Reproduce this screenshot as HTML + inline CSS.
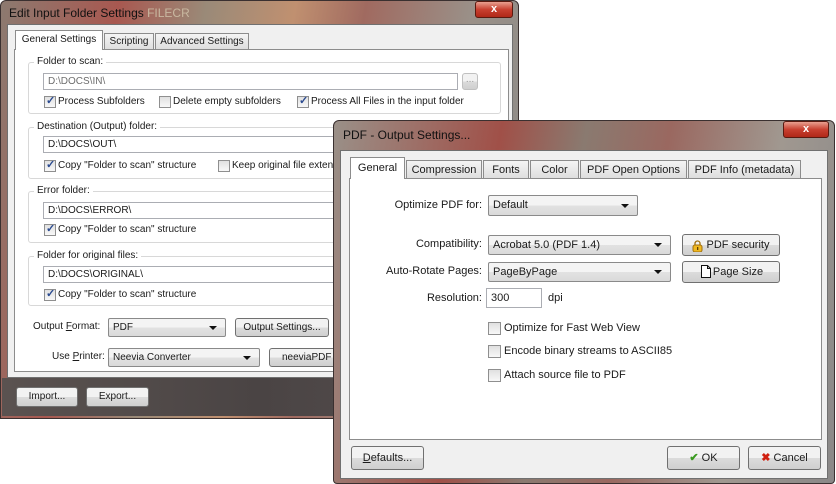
<!DOCTYPE html>
<html><head><meta charset="utf-8"><style>
*{box-sizing:border-box;margin:0;padding:0}
body{width:836px;height:484px;position:relative;background:#fff;overflow:hidden;font-family:"Liberation Sans",sans-serif;color:#1a1a1a}
.a{position:absolute}
.win{position:absolute;border:1px solid #3a3030;border-radius:6px 6px 0 0}
.L{font-size:10px}
.R{font-size:11px}
.close{position:absolute;border:1px solid #5a1a10;border-radius:3px;background:linear-gradient(#e8a090,#c84030 50%,#b02818);color:#fff;font-weight:bold;text-align:center;font-size:11px;line-height:14px}
.grp{position:absolute;border:1px solid #d8d8d8;border-radius:3px}
.lg{position:absolute;background:#fff;padding:0 3px}
.inp{position:absolute;border:1px solid #abadb3;background:#fff;padding-left:4px;line-height:15px}
.cb{position:absolute;width:12px;height:12px;border:1px solid #8f8f8f;background:linear-gradient(#e0e0e0,#f8f8f8)}
.cb.k::after{content:"✓";position:absolute;left:1px;top:-3px;font-size:11px;color:#2a4a90;font-weight:bold}
.btn{position:absolute;border:1px solid #707070;border-radius:3px;background:linear-gradient(#f2f2f2 50%,#dcdcdc 50%,#cfcfcf);text-align:center}
.sel{position:absolute;border:1px solid #8a8a8a;border-radius:2px;background:linear-gradient(#f4f4f4 50%,#e2e2e2 50%,#dadada);padding-left:4px}
.sel::after{content:"";position:absolute;right:8px;top:50%;margin-top:-2px;border:4px solid transparent;border-top:4px solid #111;border-bottom:0}
.tab{position:absolute;border:1px solid #8c8c8c;border-bottom:0;background:linear-gradient(#f4f4f4,#dedede);text-align:center}
.tab.s{background:#fff;z-index:2}
</style></head><body>
<!-- left window -->
<div class="win" style="left:0;top:0;width:519px;height:419px;background:linear-gradient(100deg,#8c7a70 0%,#a85850 20%,#9a8a78 35%,#c09070 50%,#a06a60 62%,#9a9088 80%,#8a8a88 100%)"></div>
<div class="a" style="left:2px;top:378px;width:514px;height:38px;background:linear-gradient(90deg,#5a5250,#4a4444 50%,#585050)"></div>
<div class="a L" style="left:9px;top:6px;font-size:12px;color:#111">Edit Input Folder Settings <span style="color:#c8b8a0">FILECR</span></div>
<div class="close" style="left:475px;top:1px;width:38px;height:17px">x</div>
<div class="a" style="left:7px;top:24px;width:506px;height:354px;background:#f0f0f0;border:1px solid #707070"></div>
<div class="a" style="left:14px;top:49px;width:495px;height:323px;background:#fff;border:1px solid #8c8c8c"></div>
<div class="tab s L" style="left:15px;top:30px;width:88px;height:20px;line-height:18px">General Settings</div>
<div class="tab L" style="left:104px;top:33px;width:50px;height:16px;line-height:16px">Scripting</div>
<div class="tab L" style="left:155px;top:33px;width:94px;height:16px;line-height:16px">Advanced Settings</div>

<div class="grp" style="left:28px;top:62px;width:473px;height:52px"></div>
<div class="lg L" style="left:34px;top:56px">Folder to scan:</div>
<div class="inp L" style="left:43px;top:73px;width:415px;height:17px;color:#6d6d6d">D:\DOCS\IN\</div>
<div class="btn L" style="left:462px;top:73px;width:16px;height:17px;border-color:#c0c0c0;color:#999;line-height:12px">...</div>
<div class="cb k" style="left:44px;top:96px"></div><div class="a L" style="left:58px;top:96px">Process Subfolders</div>
<div class="cb" style="left:159px;top:96px"></div><div class="a L" style="left:173px;top:96px">Delete empty subfolders</div>
<div class="cb k" style="left:297px;top:96px"></div><div class="a L" style="left:311px;top:96px">Process All Files in the input folder</div>

<div class="grp" style="left:28px;top:127px;width:473px;height:52px"></div>
<div class="lg L" style="left:34px;top:121px">Destination (Output) folder:</div>
<div class="inp L" style="left:43px;top:136px;width:440px;height:17px">D:\DOCS\OUT\</div>
<div class="cb k" style="left:44px;top:160px"></div><div class="a L" style="left:58px;top:160px">Copy "Folder to scan" structure</div>
<div class="cb" style="left:218px;top:160px"></div><div class="a L" style="left:232px;top:160px">Keep original file extensi</div>

<div class="grp" style="left:28px;top:191px;width:473px;height:52px"></div>
<div class="lg L" style="left:34px;top:185px">Error folder:</div>
<div class="inp L" style="left:43px;top:202px;width:440px;height:17px">D:\DOCS\ERROR\</div>
<div class="cb k" style="left:44px;top:224px"></div><div class="a L" style="left:58px;top:224px">Copy "Folder to scan" structure</div>

<div class="grp" style="left:28px;top:256px;width:473px;height:50px"></div>
<div class="lg L" style="left:34px;top:250px">Folder for original files:</div>
<div class="inp L" style="left:43px;top:266px;width:440px;height:17px">D:\DOCS\ORIGINAL\</div>
<div class="cb k" style="left:44px;top:289px"></div><div class="a L" style="left:58px;top:289px">Copy "Folder to scan" structure</div>

<div class="a L" style="left:33px;top:321px">Output <u>F</u>ormat:</div>
<div class="sel L" style="left:108px;top:318px;width:118px;height:19px;line-height:17px">PDF</div>
<div class="btn L" style="left:235px;top:318px;width:94px;height:19px;line-height:17px">Output Settings...</div>
<div class="a L" style="left:52px;top:351px">Use <u>P</u>rinter:</div>
<div class="sel L" style="left:108px;top:348px;width:152px;height:19px;line-height:17px">Neevia Converter</div>
<div class="btn L" style="left:269px;top:348px;width:80px;height:19px;line-height:17px;text-align:left;padding-left:12px">neeviaPDF</div>
<div class="btn L" style="left:16px;top:387px;width:62px;height:20px;line-height:18px">Import...</div>
<div class="btn L" style="left:86px;top:387px;width:63px;height:20px;line-height:18px">Export...</div>

<!-- right window -->
<div class="win" style="left:333px;top:120px;width:502px;height:364px;border-radius:6px 6px 4px 4px;background:linear-gradient(100deg,#9a9088 0%,#a05048 30%,#8a7a70 45%,#9a6860 60%,#a09890 80%,#8a8888 100%)"></div>
<div class="a R" style="left:343px;top:128px;font-size:12px;color:#111">PDF - Output Settings...</div>
<div class="close" style="left:783px;top:121px;width:46px;height:17px">x</div>
<div class="a" style="left:340px;top:150px;width:488px;height:329px;background:#f0f0f0;border:1px solid #707070"></div>
<div class="a" style="left:349px;top:178px;width:473px;height:262px;background:#fff;border:1px solid #8c8c8c"></div>
<div class="tab s R" style="left:350px;top:157px;width:55px;height:22px;line-height:20px">General</div>
<div class="tab R" style="left:406px;top:160px;width:76px;height:18px;line-height:18px">Compression</div>
<div class="tab R" style="left:483px;top:160px;width:46px;height:18px;line-height:18px">Fonts</div>
<div class="tab R" style="left:530px;top:160px;width:49px;height:18px;line-height:18px">Color</div>
<div class="tab R" style="left:580px;top:160px;width:107px;height:18px;line-height:18px">PDF Open Options</div>
<div class="tab R" style="left:688px;top:160px;width:113px;height:18px;line-height:18px">PDF Info (metadata)</div>

<div class="a R" style="left:330px;top:199px;width:152px;text-align:right">Optimize PDF for:</div>
<div class="sel R" style="left:488px;top:195px;width:150px;height:21px;line-height:19px">Default</div>
<div class="a R" style="left:330px;top:238px;width:152px;text-align:right">Compatibility:</div>
<div class="sel R" style="left:488px;top:235px;width:183px;height:20px;line-height:18px">Acrobat 5.0 (PDF 1.4)</div>
<div class="btn R" style="left:682px;top:234px;width:98px;height:22px;line-height:20px;padding-left:14px">PDF security</div>
<div class="a" style="left:692px;top:239px;width:11px;height:12px"><svg width="11" height="12"><path d="M3 5V3.5a2.5 2.5 0 0 1 5 0V5" fill="none" stroke="#a07010" stroke-width="1.3"/><rect x="1" y="5" width="9" height="7" rx="2" fill="#f0b820" stroke="#a07010"/><rect x="5" y="7" width="1.3" height="3" fill="#604000"/></svg></div>
<div class="a R" style="left:330px;top:265px;width:152px;text-align:right">Auto-Rotate Pages:</div>
<div class="sel R" style="left:488px;top:262px;width:183px;height:20px;line-height:18px">PageByPage</div>
<div class="btn R" style="left:682px;top:261px;width:98px;height:22px;line-height:20px;padding-left:14px">Page Size</div>
<div class="a" style="left:701px;top:265px"><svg width="10" height="13"><path d="M.5 .5H6.5L9.5 3.5V12.5H.5Z M6.5 .5V3.5H9.5" fill="#fff" stroke="#111"/></svg></div>
<div class="a R" style="left:330px;top:292px;width:152px;text-align:right">Resolution:</div>
<div class="inp R" style="left:486px;top:288px;width:56px;height:20px;line-height:18px">300</div>
<div class="a R" style="left:548px;top:292px">dpi</div>
<div class="cb" style="left:488px;top:322px;width:13px;height:13px"></div><div class="a R" style="left:504px;top:322px">Optimize for Fast Web View</div>
<div class="cb" style="left:488px;top:345px;width:13px;height:13px"></div><div class="a R" style="left:504px;top:345px">Encode binary streams to ASCII85</div>
<div class="cb" style="left:488px;top:369px;width:13px;height:13px"></div><div class="a R" style="left:504px;top:369px">Attach source file to PDF</div>

<div class="btn R" style="left:351px;top:446px;width:73px;height:24px;line-height:22px"><u>D</u>efaults...</div>
<div class="btn R" style="left:667px;top:446px;width:73px;height:24px;line-height:22px"><span style="color:#3a9a20;font-weight:bold">✔</span> OK</div>
<div class="btn R" style="left:748px;top:446px;width:73px;height:24px;line-height:22px"><span style="color:#d02010;font-weight:bold">✖</span> Cancel</div>
</body></html>
